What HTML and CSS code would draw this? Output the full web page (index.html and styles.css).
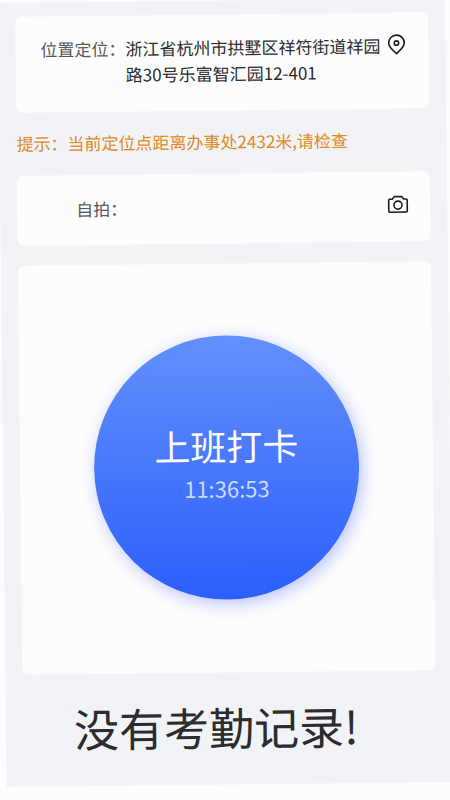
FILE: index.html
```html
<!DOCTYPE html>
<html lang="zh-CN">
<head>
<meta charset="utf-8">
<meta name="viewport" content="width=device-width, initial-scale=1">
<title>考勤打卡</title>
<link rel="stylesheet" href="styles.css">
</head>
<body>
<main class="screen">
  <section class="card row location">
    <span class="label">位置定位：</span>
    <span class="value">浙江省杭州市拱墅区祥符街道祥园路30号乐富智汇园12-401</span>
    <button class="icon-button" type="button" aria-label="重新定位">
      <svg viewBox="0 0 24 24" width="24" height="24"><path d="M12 21C8 17.500 4.200 14.500 4.200 10.300A7.800 7.800 0 0 1 19.800 10.300C19.800 14.500 16 17.500 12 21Z"/><circle cx="12" cy="10.500" r="2.200"/></svg>
    </button>
  </section>

  <p class="hint">提示：当前定位点距离办事处2432米,请检查</p>

  <section class="card row selfie">
    <span class="label">自拍：</span>
    <span class="value"></span>
    <button class="icon-button" type="button" aria-label="拍照">
      <svg viewBox="0 0 24 24" width="24" height="24"><path d="M3.500 6.500H6L8 4H15.500L17.500 6.500H20Q21 6.500 21 7.500V18.500Q21 19.500 20 19.500H3.500Q2.500 19.500 2.500 18.500V7.500Q2.500 6.500 3.500 6.500Z"/><circle cx="11.750" cy="12.500" r="4"/></svg>
    </button>
  </section>

  <section class="card punch-card">
    <button class="punch" type="button">
      <span class="punch-title">上班打卡</span>
      <time class="punch-time">11:36:53</time>
    </button>
  </section>

  <p class="empty">没有考勤记录!</p>
</main>
</body>
</html>
```
FILE: styles.css
```css
* {
  box-sizing: border-box;
}

html {
  overflow: hidden;
  background: #fcfcfc;
}

body {
  margin: 0;
  overflow: hidden;
  color: #2c2c2e;
  font-family: "Noto Sans CJK SC", sans-serif;
  font-size: 17px;
  line-height: 26px;
}

/* The whole sheet is tilted slightly anticlockwise. */
.screen {
  margin: 3px 5px 0 -2px;
  padding: 14px 17px 26px;
  background: #f1f3f6;
  transform: rotate(-0.63deg);
  transform-origin: 0 0;
}

.card {
  border-radius: 6px;
  background: #fcfcfc;
}

.row {
  display: grid;
  grid-template-columns: 110px 1fr 24px;
  padding-right: 20px;
}

.location {
  padding-top: 20px;
  padding-bottom: 24px;
}

.selfie {
  padding-top: 21px;
  padding-bottom: 23px;
}

.label {
  color: #58585a;
  text-align: right;
}

.icon-button {
  display: block;
  width: 24px;
  height: 24px;
  padding: 0;
  border: 0;
  background: none;
}

.icon-button svg {
  display: block;
  fill: none;
  stroke: #1c1c1e;
  stroke-width: 1.6;
  stroke-linejoin: round;
}

.hint {
  margin: 18px 0 19px;
  color: #e28a1e;
}

.punch-card {
  display: flex;
  justify-content: center;
  margin-top: 20px;
  padding: 72px 0 73px;
}

.punch {
  display: flex;
  flex-direction: column;
  align-items: center;
  justify-content: center;
  width: 64%;
  aspect-ratio: 1;
  padding: 0 0 14px;
  border: 0;
  border-radius: 50%;
  background: linear-gradient(#6390fb, #2c5ffc);
  box-shadow: 3px 4px 16px rgba(60, 90, 255, 0.35);
  color: #fcfcff;
  font-family: inherit;
}

.punch-title {
  font-size: 36px;
  line-height: 54px;
}

.punch-time {
  color: #c9dcff;
  font-size: 22px;
  line-height: 32px;
}

.empty {
  margin: 22px 0 0;
  padding-left: 51px;
  font-size: 45px;
  line-height: 64px;
}
```
